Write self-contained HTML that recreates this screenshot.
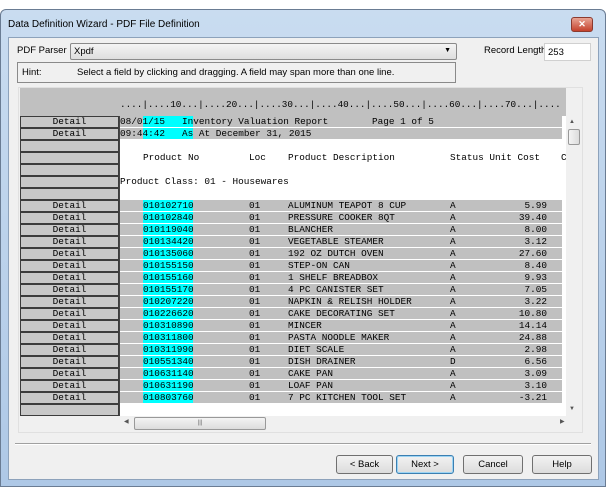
<!DOCTYPE html>
<html><head><style>
body{margin:0;width:606px;height:487px;background:#fff;position:relative;overflow:hidden;font-family:"Liberation Sans",sans-serif;font-size:9.5px;color:#000}
.abs{position:absolute}
.win{left:0;top:9px;width:604px;height:476px;background:linear-gradient(#c9dcf0,#aec8e6);border:1px solid #6a7c93;border-radius:6px 6px 0 0}
.client{left:8px;top:37px;width:589px;height:441px;background:#f0f0f0;border:1px solid #8da2bb}
.mono{font-family:"Liberation Mono","Courier New",monospace;font-size:9.4px;white-space:pre;line-height:12px}
.lab{left:20px;width:97px;height:10px;background:#c8c8c8;border:1px solid #3c3c3c;text-align:center;line-height:10px}
.row{left:120px;width:442px;height:11px;background:#c0c0c0}
.cy{left:143px;width:50px;height:11px;background:#00ffff}
.btn{top:455px;height:17px;border:1px solid #707070;border-radius:3px;background:linear-gradient(#f2f2f2,#dcdcdc);text-align:center;line-height:17px;font-size:9.5px}
.d{top:200px}
</style></head><body>
<div class="abs win"></div>
<div class="abs" style="left:8px;top:19px;font-size:10px;color:#000">Data Definition Wizard - PDF File Definition</div>
<div class="abs" style="left:571px;top:17px;width:20px;height:13px;border:1px solid #8b3a2f;border-radius:3px;background:linear-gradient(#e8a393,#c4412c);color:#fff;font-size:9px;font-weight:bold;text-align:center;line-height:13px">✕</div>
<div class="abs client"></div>
<div class="abs" style="left:17px;top:45px">PDF Parser</div>
<div class="abs" style="left:70px;top:43px;width:385px;height:15px;border:1px solid #8a8a8a;border-radius:2px;background:linear-gradient(#f4f4f4,#dedede)"><span style="position:absolute;left:3px;top:2px">Xpdf</span><span style="position:absolute;right:5px;top:3px;font-size:7px">▼</span></div>
<div class="abs" style="left:484px;top:45px">Record Length</div>
<div class="abs" style="left:544px;top:43px;width:45px;height:16px;background:#fff;border:1px solid #d0d0d0"><span style="position:absolute;left:3px;top:3px">253</span></div>
<div class="abs" style="left:17px;top:62px;width:437px;height:19px;border:1px solid #8a8a8a;background:#f0f0f0"><span style="position:absolute;left:4px;top:4px">Hint:</span><span style="position:absolute;left:59px;top:4px">Select a field by clicking and dragging. A field may span more than one line.</span></div>
<!-- grid -->
<div class="abs" style="left:18px;top:87px;width:563px;height:344px;background:#f0f0f0;border:1px solid #e0e0e0"></div>
<div class="abs" style="left:20px;top:88px;width:546px;height:28px;background:#c0c0c0"></div>
<div class="abs" style="left:120px;top:116px;width:446px;height:300px;background:#fff"></div>
<div class="abs mono" style="left:120px;top:99px;font-size:9.3px">....|....10...|....20...|....30...|....40...|....50...|....60...|....70...|....</div>
<div class="abs" style="left:119px;top:116px;width:1px;height:300px;background:#444"></div>
<div class="abs row" style="top:116px"></div><div class="abs row" style="top:128px"></div>
<div class="abs cy" style="top:116px"></div><div class="abs cy" style="top:128px"></div>
<div class="abs mono" style="left:120px;top:116px">08/01/15
09:44:42</div>
<div class="abs mono" style="left:182px;top:116px">Inventory Valuation Report
As At December 31, 2015</div>
<div class="abs mono" style="left:372px;top:116px">Page 1 of 5</div>
<div class="abs mono" style="left:143px;top:152px">Product No</div>
<div class="abs mono" style="left:249px;top:152px">Loc</div>
<div class="abs mono" style="left:288px;top:152px">Product Description</div>
<div class="abs mono" style="left:450px;top:152px">Status Unit Cost</div>
<div class="abs mono" style="left:561px;top:152px">C</div>
<div class="abs mono" style="left:120px;top:176px">Product Class: 01 - Housewares</div>
<!-- detail rows -->
<div class="abs row" style="top:200px"></div><div class="abs row" style="top:212px"></div><div class="abs row" style="top:224px"></div><div class="abs row" style="top:236px"></div><div class="abs row" style="top:248px"></div><div class="abs row" style="top:260px"></div><div class="abs row" style="top:272px"></div><div class="abs row" style="top:284px"></div><div class="abs row" style="top:296px"></div><div class="abs row" style="top:308px"></div><div class="abs row" style="top:320px"></div><div class="abs row" style="top:332px"></div><div class="abs row" style="top:344px"></div><div class="abs row" style="top:356px"></div><div class="abs row" style="top:368px"></div><div class="abs row" style="top:380px"></div><div class="abs row" style="top:392px"></div>
<div class="abs cy" style="top:200px;height:203px;background:repeating-linear-gradient(#00ffff 0 11px,#fff 11px 12px)"></div>
<div class="abs mono d" style="left:143px">010102710
010102840
010119040
010134420
010135060
010155150
010155160
010155170
010207220
010226620
010310890
010311800
010311990
010551340
010631140
010631190
010803760</div>
<div class="abs mono d" style="left:249px">01
01
01
01
01
01
01
01
01
01
01
01
01
01
01
01
01</div>
<div class="abs mono d" style="left:288px">ALUMINUM TEAPOT 8 CUP
PRESSURE COOKER 8QT
BLANCHER
VEGETABLE STEAMER
192 OZ DUTCH OVEN
STEP-ON CAN
1 SHELF BREADBOX
4 PC CANISTER SET
NAPKIN &amp; RELISH HOLDER
CAKE DECORATING SET
MINCER
PASTA NOODLE MAKER
DIET SCALE
DISH DRAINER
CAKE PAN
LOAF PAN
7 PC KITCHEN TOOL SET</div>
<div class="abs mono d" style="left:450px">A
A
A
A
A
A
A
A
A
A
A
A
A
D
A
A
A</div>
<div class="abs mono d" style="left:480px;width:67px;text-align:right">5.99
39.40
8.00
3.12
27.60
8.40
9.93
7.05
3.22
10.80
14.14
24.88
2.98
6.56
3.09
3.10
-3.21</div>
<!-- labels -->
<div class="abs mono lab" style="top:116px">Detail</div><div class="abs mono lab" style="top:128px">Detail</div>
<div class="abs lab" style="top:140px"></div><div class="abs lab" style="top:152px"></div><div class="abs lab" style="top:164px"></div><div class="abs lab" style="top:176px"></div><div class="abs lab" style="top:188px"></div>
<div class="abs mono lab" style="top:200px">Detail</div><div class="abs mono lab" style="top:212px">Detail</div><div class="abs mono lab" style="top:224px">Detail</div><div class="abs mono lab" style="top:236px">Detail</div><div class="abs mono lab" style="top:248px">Detail</div><div class="abs mono lab" style="top:260px">Detail</div><div class="abs mono lab" style="top:272px">Detail</div><div class="abs mono lab" style="top:284px">Detail</div><div class="abs mono lab" style="top:296px">Detail</div><div class="abs mono lab" style="top:308px">Detail</div><div class="abs mono lab" style="top:320px">Detail</div><div class="abs mono lab" style="top:332px">Detail</div><div class="abs mono lab" style="top:344px">Detail</div><div class="abs mono lab" style="top:356px">Detail</div><div class="abs mono lab" style="top:368px">Detail</div><div class="abs mono lab" style="top:380px">Detail</div><div class="abs mono lab" style="top:392px">Detail</div>
<div class="abs lab" style="top:404px"></div>
<!-- scrollbars -->
<div class="abs" style="left:566px;top:116px;width:14px;height:300px;background:#f0f0f0"></div>
<div class="abs" style="left:569px;top:119px;font-size:6px;color:#555">▲</div>
<div class="abs" style="left:568px;top:129px;width:10px;height:14px;border:1px solid #999;background:linear-gradient(90deg,#f4f4f4,#dcdcdc);border-radius:2px"></div>
<div class="abs" style="left:569px;top:406px;font-size:6px;color:#555">▼</div>
<div class="abs" style="left:120px;top:416px;width:446px;height:14px;background:#f0f0f0"></div>
<div class="abs" style="left:124px;top:418px;font-size:6px;color:#555">◀</div>
<div class="abs" style="left:134px;top:417px;width:130px;height:11px;border:1px solid #999;border-radius:2px;background:linear-gradient(#f4f4f4,#dcdcdc);text-align:center;font-size:6px;line-height:11px;color:#666">|||</div>
<div class="abs" style="left:560px;top:418px;font-size:6px;color:#555">▶</div>
<!-- footer -->
<div class="abs" style="left:15px;top:443px;width:576px;height:1px;background:#a0a0a0;border-bottom:1px solid #fff"></div>
<div class="abs btn" style="left:336px;width:55px">&lt; Back</div>
<div class="abs btn" style="left:396px;width:56px;border-color:#3c7fb1;box-shadow:inset 0 0 0 1px #9cd4f4">Next &gt;</div>
<div class="abs btn" style="left:463px;width:58px">Cancel</div>
<div class="abs btn" style="left:532px;width:58px">Help</div>
</body></html>
